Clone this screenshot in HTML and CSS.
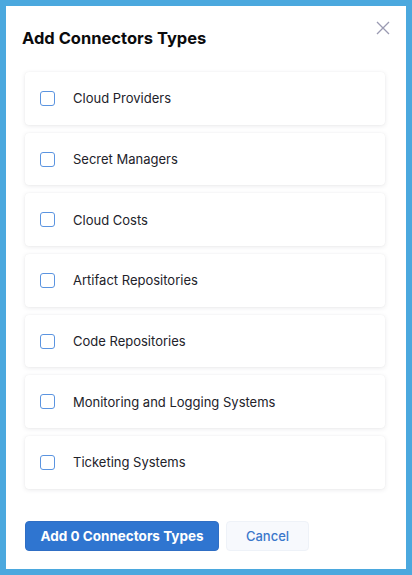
FILE: index.html
```html
<!DOCTYPE html>
<html>
<head>
<meta charset="utf-8">
<link rel="stylesheet" href="styles.css">
</head>
<body>
<div class="dialog">
  <button class="close" aria-label="Close">
    <svg width="14" height="14" viewBox="0 0 14 14"><path d="M1 1L13 13M13 1L1 13" stroke="#9a9ab2" stroke-width="1.3" fill="none"/></svg>
  </button>
  <h1 class="title">Add Connectors Types</h1>
  <div class="list">
    <label class="card"><span class="box"></span><span class="label">Cloud Providers</span></label>
    <label class="card"><span class="box"></span><span class="label">Secret Managers</span></label>
    <label class="card"><span class="box"></span><span class="label">Cloud Costs</span></label>
    <label class="card"><span class="box"></span><span class="label">Artifact Repositories</span></label>
    <label class="card"><span class="box"></span><span class="label">Code Repositories</span></label>
    <label class="card"><span class="box"></span><span class="label">Monitoring and Logging Systems</span></label>
    <label class="card"><span class="box"></span><span class="label">Ticketing Systems</span></label>
  </div>
  <div class="actions">
    <button class="btn primary">Add 0 Connectors Types</button>
    <button class="btn secondary">Cancel</button>
  </div>
</div>
</body>
</html>
```
FILE: styles.css
```css
* { box-sizing: border-box; }
html, body { margin: 0; }
body {
  background: #4ba8de;
  padding: 6px;
  font-family: Inter, "Noto Sans", sans-serif;
  width: 412px;
  height: 575px;
}
.dialog {
  position: relative;
  background: #fff;
  width: 400px;
  height: 563px;
  padding: 20px 21px 0 19px;
}
.close {
  position: absolute;
  top: 15px;
  right: 16px;
  border: 0;
  background: none;
  padding: 0;
  width: 14px;
  height: 14px;
  display: flex;
}
.title {
  margin: 0 0 22px -3px;
  font-size: 16.5px;
  line-height: 24px;
  font-weight: 700;
  color: #0b0b0d;
}
.list {
  display: flex;
  flex-direction: column;
  gap: 8px;
}
.card {
  display: flex;
  align-items: center;
  height: 52.7px;
  padding: 0 15px;
  background: #fff;
  border-radius: 4px;
  box-shadow: 0 0 1px rgba(40, 41, 61, 0.08), 0 1px 4px rgba(96, 97, 112, 0.14);
}
.box {
  width: 15px;
  height: 15px;
  border: 1.5px solid #5b94e0;
  border-radius: 3px;
  margin-right: 18px;
  flex: none;
}
.label {
  font-size: 13px;
  color: #22222a;
}
.actions {
  display: flex;
  gap: 7px;
  margin-top: 32px;
}
.btn {
  height: 30px;
  border-radius: 4px;
  font-family: Inter, "Noto Sans", sans-serif;
  font-size: 13px;
  padding: 0;
  white-space: nowrap;
}
.primary {
  background: #2f75d0;
  color: #fff;
  border: 1px solid #2f6ec4;
  font-weight: 700;
  font-size: 13.5px;
  width: 194px;
}
.secondary {
  background: #f7f9fd;
  color: #3a77cb;
  border: 1px solid #eef2f8;
  font-weight: 500;
  width: 83px;
}
```
